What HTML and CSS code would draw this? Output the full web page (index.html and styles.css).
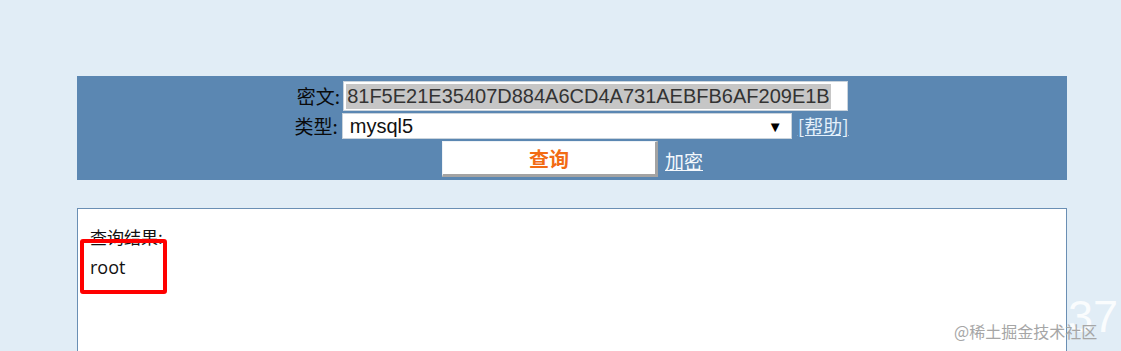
FILE: index.html
```html
<!DOCTYPE html>
<html>
<head>
<meta charset="utf-8">
<link rel="stylesheet" href="styles.css">
</head>
<body>
<div class="page">
  <div class="panel">
    <div class="row r1">
      <span class="label">密文:</span>
      <div class="field cipher"><span class="sel">81F5E21E35407D884A6CD4A731AEBFB6AF209E1B</span></div>
    </div>
    <div class="row r2">
      <span class="label">类型:</span>
      <div class="field select"><span>mysql5</span><span class="arrow">▼</span></div>
      <a class="link help">[帮助]</a>
    </div>
    <div class="row r3">
      <div class="btn">查询</div>
      <a class="link enc">加密</a>
    </div>
  </div>
  <div class="result">
    <div class="title">查询结果:</div>
    <div class="answer">root</div>
    <div class="mark"></div>
  </div>
</div>
<div class="wm-num">37</div>
<div class="wm-text">@稀土掘金技术社区</div>
</body>
</html>
```
FILE: styles.css
```css
html, body {
  margin: 0;
  padding: 0;
  height: 351px;
  overflow: hidden;
  background: #e1edf6;
  font-family: "Liberation Sans", Arial, "Noto Sans CJK SC", sans-serif;
}
.page {
  padding: 76px 54px 0 77px;
  width: 990px;
}
.panel {
  background: #5b87b2;
  height: 104px;
  box-sizing: border-box;
  padding-top: 5px;
  display: flex;
  flex-direction: column;
  align-items: center;
  gap: 2px;
}
.row {
  display: flex;
  align-items: center;
}
.r1 { margin-left: 1px; }
.r2 { margin-left: -1px; }
.r3 { margin-left: 1px; }
.label {
  font-size: 19px;
  color: #0a0a0a;
  font-family: "Noto Sans CJK SC", sans-serif;
  margin-right: 3px;
  line-height: 22px;
}
.field {
  background: #fff;
  box-sizing: border-box;
  border: 1px solid #c9d3dc;
  display: flex;
  align-items: center;
  font-size: 20px;
  color: #333;
}
.cipher {
  width: 505px;
  height: 30px;
  padding-left: 2px;
}
.sel {
  background: #c6c6c6;
  padding: 1px 1px;
  line-height: 23px;
}
.select {
  width: 450px;
  height: 26px;
  padding: 0 8px 0 7px;
  justify-content: space-between;
  margin-left: 1px;
  color: #111;
}
.arrow {
  font-size: 15px;
  color: #000;
}
.link {
  color: #e4f0fb;
  text-decoration: underline;
  font-size: 19px;
  font-family: "Noto Sans CJK SC", sans-serif;
  line-height: 22px;
}
.help {
  margin-left: 6px;
}
.btn {
  width: 216px;
  height: 36px;
  box-sizing: border-box;
  background: #fff;
  border-top: 1px solid #eef2f6;
  border-left: 1px solid #eef2f6;
  border-right: 3px solid #a3a3a3;
  border-bottom: 3px solid #a3a3a3;
  color: #f26b14;
  font-weight: bold;
  font-size: 20px;
  font-family: "Noto Sans CJK SC", sans-serif;
  display: flex;
  align-items: center;
  justify-content: center;
}
.enc {
  margin-left: 7px;
  margin-top: 3px;
  color: #f4f8fc;
}
.result {
  margin-top: 28px;
  background: #fff;
  border: 1px solid #6a8fb4;
  height: 220px;
  box-sizing: border-box;
  padding: 17px 12px;
  position: relative;
  font-family: "Open Sans", "Noto Sans CJK SC", sans-serif;
  font-size: 17px;
  color: #111;
}
.title {
  line-height: 22px;
  font-family: "Noto Sans CJK SC", sans-serif;
}
.answer {
  line-height: 22px;
  margin-top: 8px;
  font-size: 18px;
}
.mark {
  position: absolute;
  left: 2px;
  top: 30px;
  width: 87px;
  height: 55px;
  box-sizing: border-box;
  border: 4px solid #ff0000;
  border-radius: 3px;
}
.wm-num {
  position: absolute;
  left: 1068px;
  top: 291px;
  font-size: 45px;
  color: rgba(255,255,255,0.85);
  font-family: "Liberation Sans", sans-serif;
}
.wm-text {
  position: absolute;
  left: 954px;
  top: 320px;
  font-size: 16px;
  color: #a6a6a6;
  font-family: "Noto Sans CJK SC", sans-serif;
  line-height: 22px;
}
```
